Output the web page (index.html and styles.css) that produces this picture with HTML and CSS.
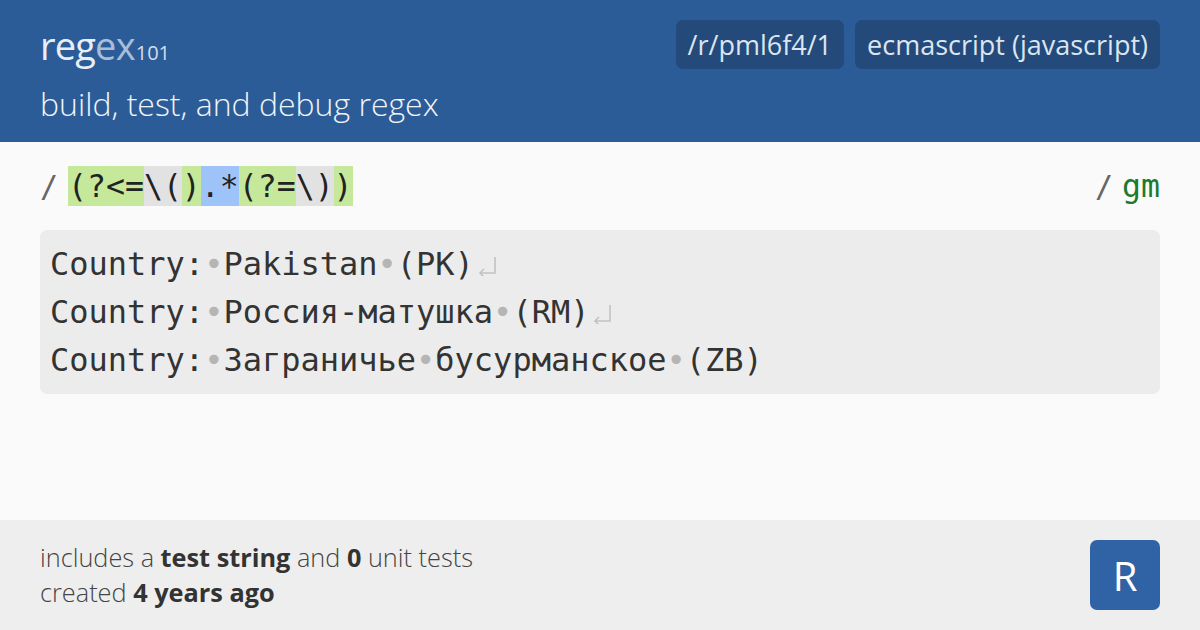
FILE: index.html
```html
<!DOCTYPE html>
<html>
<head>
<meta charset="utf-8">
<link rel="stylesheet" href="styles.css">
</head>
<body>
<div class="page">
  <header class="header">
    <div class="brand">
      <div class="logo"><span class="logo-re">reg</span><span class="logo-ex">ex</span><span class="logo-num">101</span></div>
      <div class="tagline">build, test, and debug regex</div>
    </div>
    <div class="badges">
      <span class="badge">/r/pml6f4/1</span>
      <span class="badge">ecmascript (javascript)</span>
    </div>
  </header>
  <main class="main">
    <div class="regex-row">
      <div class="regex">
        <span class="delim">/</span>
        <span class="tok g">(?&lt;=</span><span class="tok e">\(</span><span class="tok g">)</span><span class="tok b">.*</span><span class="tok g">(?=</span><span class="tok e">\)</span><span class="tok g">)</span>
      </div>
      <div class="flags"><span class="delim">/</span><span class="flag">gm</span></div>
    </div>
    <div class="test">
      <div class="line">Country:<span class="ws">•</span>Pakistan<span class="ws">•</span>(PK)<svg class="nl" viewBox="0 0 19 20" width="19" height="20"><path d="M18 1 V17 H3 M7 13 L3 17 L7 21" fill="none" stroke="#c2c2c2" stroke-width="1.6"/></svg></div>
      <div class="line">Country:<span class="ws">•</span>Россия-матушка<span class="ws">•</span>(RM)<svg class="nl" viewBox="0 0 19 20" width="19" height="20"><path d="M18 1 V17 H3 M7 13 L3 17 L7 21" fill="none" stroke="#c2c2c2" stroke-width="1.6"/></svg></div>
      <div class="line">Country:<span class="ws">•</span>Заграничье<span class="ws">•</span>бусурманское<span class="ws">•</span>(ZB)</div>
    </div>
  </main>
  <footer class="footer">
    <div class="meta">
      <div>includes a <b>test string</b> and <b>0</b> unit tests</div>
      <div>created <b>4 years ago</b></div>
    </div>
    <div class="avatar">R</div>
  </footer>
</div>
</body>
</html>
```

FILE: styles.css
```css
html, body {
  margin: 0;
  padding: 0;
}
body {
  width: 1200px;
  height: 630px;
  overflow: hidden;
  font-family: "Open Sans", "Noto Sans", sans-serif;
}
.page {
  display: flex;
  flex-direction: column;
  height: 630px;
}
.header {
  height: 142px;
  box-sizing: border-box;
  background: #2c5c97;
  padding: 20px 40px 0 40px;
  display: flex;
  justify-content: space-between;
  align-items: flex-start;
}
.logo {
  font-size: 38px;
  line-height: 50px;
  color: #e8eef6;
  letter-spacing: -0.8px;
}
.logo-ex {
  color: #a9bdd8;
}
.logo-num {
  font-size: 20px;
  color: #d3deec;
  letter-spacing: 0;
  margin-left: 1px;
}
.tagline {
  font-size: 32px;
  font-weight: 300;
  color: #f0f4f9;
  line-height: 40px;
  margin-top: 6px;
}
.badges {
  display: flex;
  gap: 11px;
}
.badge {
  background: #234a7a;
  color: #dce5f0;
  border-radius: 7px;
  font-size: 27px;
  line-height: 49px;
  padding: 0 12px;
}
.main {
  flex: 1;
  background: #fafafa;
  padding: 24px 40px 0 40px;
}
.regex-row {
  display: flex;
  justify-content: space-between;
  align-items: center;
  height: 40px;
  font-family: "DejaVu Sans Mono", monospace;
  font-size: 31.5px;
  color: #222;
}
.regex {
  display: flex;
  align-items: center;
}
.delim {
  color: #666;
  margin-right: 10px;
  font-size: 30px;
}
.tok {
  line-height: 40px;
  display: inline-block;
}
.g { background: #c5e89a; }
.e { background: #e2e2e2; }
.b { background: #9ec3f8; }
.flag {
  color: #1b7a2e;
}
.flags .delim {
  margin-right: 9px;
}
.test {
  margin-top: 24px;
  background: #ececec;
  border-radius: 7px;
  padding: 10px 10px 10px 10px;
  font-family: "DejaVu Sans Mono", monospace;
  font-size: 32px;
  color: #333;
}
.line {
  line-height: 48px;
  white-space: pre;
}
.ws {
  color: #b5b5b5;
}
.nl {
  vertical-align: -1px;
  margin-left: 3px;
}
.footer {
  height: 110px;
  box-sizing: border-box;
  background: #eeeeee;
  padding: 20px 40px 0 40px;
  display: flex;
  justify-content: space-between;
  align-items: flex-start;
}
.meta {
  font-size: 25.3px;
  font-weight: 300;
  color: #444;
  line-height: 35px;
  margin-top: 0px;
}
.meta b {
  font-weight: 700;
  color: #333;
}
.avatar {
  width: 70px;
  height: 70px;
  border-radius: 7px;
  background: #3063a5;
  color: #fff;
  font-size: 40px;
  display: flex;
  align-items: center;
  justify-content: center;
}
```
